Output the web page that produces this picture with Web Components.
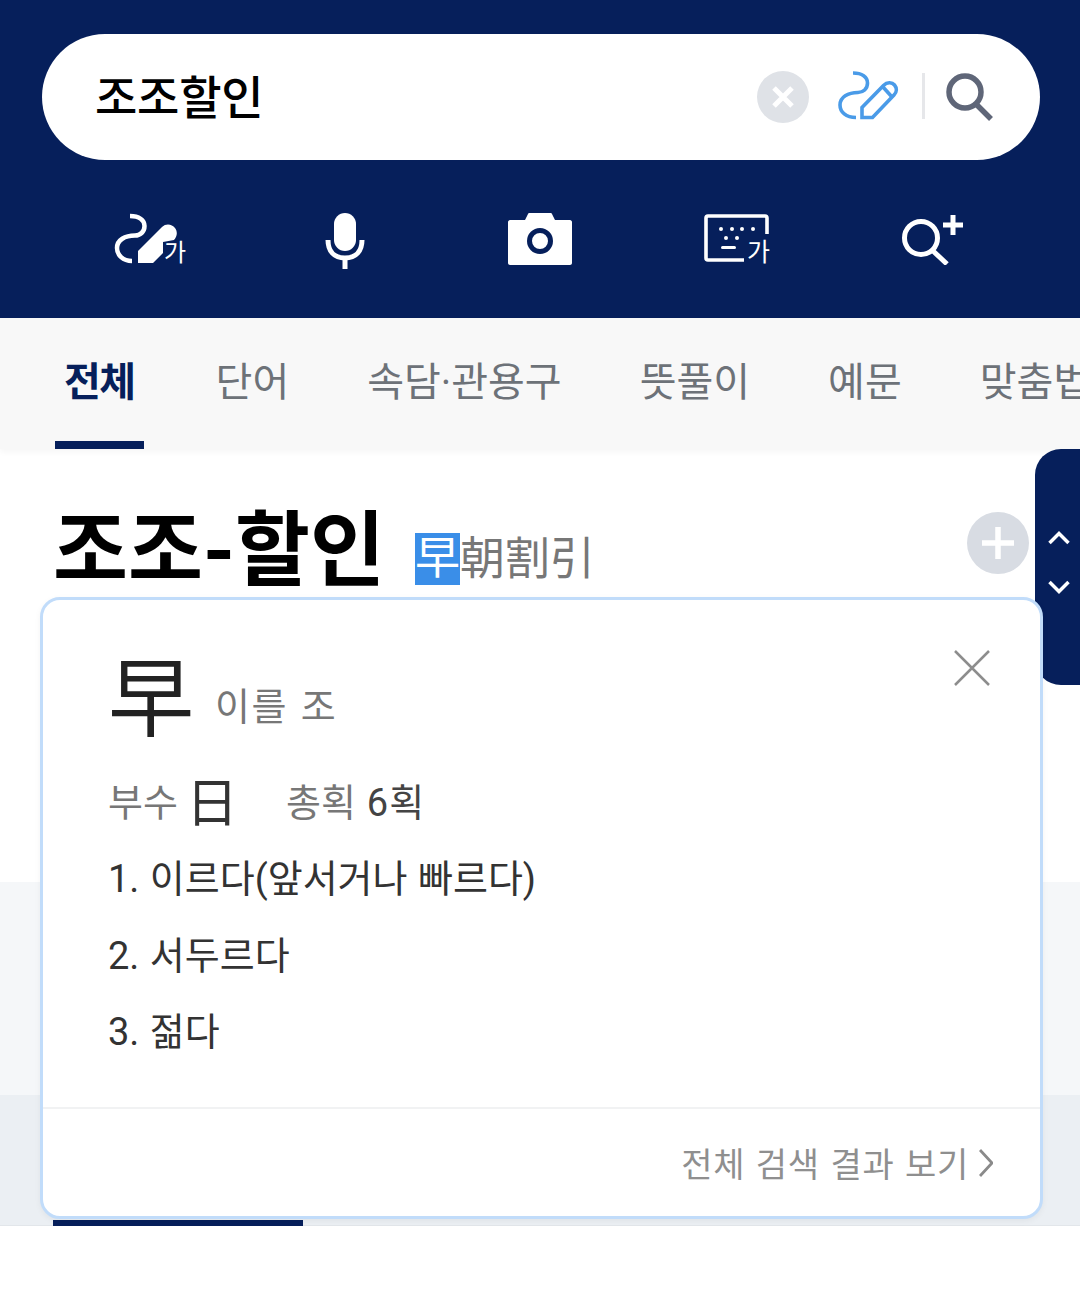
<!DOCTYPE html>
<html lang="ko">
<head>
<meta charset="utf-8">
<title>조조할인</title>
<style>
    html, body { margin: 0; padding: 0; background: #fff; }
    body {
        width: 1080px;
        height: 1308px;
        overflow: hidden;
        position: relative;
        font-family: Roboto, "Noto Sans CJK KR", sans-serif;
    }
</style>
</head>
<body>
<dict-header></dict-header>
<dict-tabs active="0">
    <dict-tab>전체</dict-tab>
    <dict-tab>단어</dict-tab>
    <dict-tab>속담·관용구</dict-tab>
    <dict-tab>뜻풀이</dict-tab>
    <dict-tab>예문</dict-tab>
    <dict-tab>맞춤법</dict-tab>
</dict-tabs>
<dict-result word="조조-할인" hanja="朝割引" mark="早"></dict-result>
<dict-handle></dict-handle>
<hanja-popup char="早" reading="이를 조" radical="日" strokes="6획">
    <li>이르다(앞서거나 빠르다)</li>
    <li>서두르다</li>
    <li>젊다</li>
</hanja-popup>

<script>
const FONT = 'Roboto, "Noto Sans CJK KR", sans-serif';

class DictHeader extends HTMLElement {
    constructor(){
        super();
        this.attachShadow({ mode: 'open' });
        this.shadowRoot.innerHTML = `
            <style>
                :host { display: block; height: 318px; background: #061f5b; box-sizing: border-box; padding: 34px 40px 0 42px; font-family: ${FONT}; }
                #bar { height: 126px; border-radius: 63px; background: #fff; display: flex; align-items: center; padding: 0 47px 0 53px; }
                #query { flex: 1; font-size: 46px; font-weight: 500; color: #000; line-height: 1; margin-top: 2px; letter-spacing: -0.2px; }
                #clear { margin-right: 27px; }
                #pen { margin-right: 22px; }
                #sep { width: 3px; height: 46px; background: #e6e7ea; margin-right: 20px; margin-top: -2px; }
                svg { display: block; flex: none; }
                #tools { display: grid; grid-template-columns: repeat(5, 196px); margin: 29px 0 0 9px; }
                #tools div { height: 100px; display: flex; justify-content: center; align-items: center; }
                text { font-family: ${FONT}; fill: #fff; }
            </style>
            <div id="bar">
                <div id="query">조조할인</div>
                <svg id="clear" width="52" height="52" viewBox="0 0 52 52">
                    <circle cx="26" cy="26" r="26" fill="#dfe2e7"/>
                    <path d="M17 17 L35 35 M35 17 L17 35" stroke="#fff" stroke-width="5" fill="none"/>
                </svg>
                <svg id="pen" width="64" height="54" viewBox="0 0 64 54" fill="none" stroke="#4a9be8" stroke-width="3.6">
                    <path d="M17 3 C26 3 31.5 7 31.5 13 C31.5 19 27 22.5 22 22.5 C12 22.5 4 27 4 35 C4 42 10 47.5 20 47.5"/>
                    <path d="M26 47.5 V37.5 L47.5 15.5 C51 12 56 12 58.5 15 C61 18 61 22 58 25 L36.5 47.5 Z"/>
                    <path d="M47 17 L56 27"/>
                </svg>
                <div id="sep"></div>
                <svg width="48" height="50" viewBox="0 0 48 50" fill="none" stroke="#5f6678" stroke-width="5.5">
                    <circle cx="20" cy="20" r="16"/>
                    <path d="M31 32 L46 47"/>
                </svg>
            </div>
            <div id="tools">
                <div>
                    <svg width="76" height="56" viewBox="0 0 76 56" fill="none" stroke="#fff" stroke-width="4.5" style="margin:3px 0 0 4px">
                        <path d="M17 3 C26 3 31.5 7 31.5 13 C31.5 19 27 22.5 22 22.5 C12 22.5 4 27 4 35 C4 42 10 48 19 48"/>
                        <path d="M25 50 V38 L49 14 C53 10 59 11 62 15 C65 19 64 24 61 27 L50 29 V40 L40 50 Z" fill="#fff" stroke="none"/>
                        <text x="51" y="48" font-size="24" stroke="none">가</text>
                    </svg>
                </div>
                <div>
                    <svg width="44" height="60" viewBox="0 0 44 60" fill="none" stroke="#fff" stroke-width="5" style="margin-top:4px">
                        <rect x="11" y="2" width="22" height="38" rx="11" fill="#fff" stroke="none"/>
                        <path d="M5 29 C5 40 11 47 22 47 C33 47 39 40 39 29 M22 47 V58"/>
                    </svg>
                </div>
                <div>
                    <svg width="64" height="54" viewBox="0 0 64 54" style="margin-left:-3px">
                        <path d="M2 8 H17 L20 2 C20 1 21 1 22 1 H42 C43 1 44 1 44 2 L47 8 H62 C63 8 64 9 64 10 V51 C64 52 63 53 62 53 H2 C1 53 0 52 0 51 V10 C0 9 1 8 2 8 Z" fill="#fff"/>
                        <circle cx="32" cy="29" r="10.5" fill="none" stroke="#061f5b" stroke-width="5"/>
                    </svg>
                </div>
                <div>
                    <svg width="70" height="56" viewBox="0 0 70 56" style="margin:5px 0 0 4px">
                        <path d="M63 20 V4 C63 2.5 62 2 61 2 H4 C3 2 2 2.5 2 4 V44 C2 45.500 3 46 4 46 H40" fill="none" stroke="#fff" stroke-width="3.6"/>
                        <g fill="#fff">
                            <circle cx="17" cy="15" r="2"/><circle cx="28" cy="15" r="2"/><circle cx="38" cy="15" r="2"/><circle cx="49" cy="15" r="2"/>
                            <circle cx="22" cy="24" r="2"/><circle cx="33" cy="24" r="2"/>
                            <rect x="17" y="32" width="15" height="3" rx="1.5"/>
                        </g>
                        <text x="43" y="47" font-size="25">가</text>
                    </svg>
                </div>
                <div>
                    <svg width="64" height="54" viewBox="0 0 64 54" fill="none" stroke="#fff" stroke-width="5" style="margin-top:-2px">
                        <circle cx="20" cy="27" r="16.500"/>
                        <path d="M31 39 L46 53"/>
                        <path d="M52 4 V24 M42 14 H62"/>
                    </svg>
                </div>
            </div>
        `;
    }
}
customElements.define('dict-header', DictHeader);

class DictTab extends HTMLElement {
    constructor(){
        super();
        this.attachShadow({ mode: 'open' });
        this.shadowRoot.innerHTML = `
            <style>
                :host { display: block; flex: none; position: relative; padding: 0 9px; height: 131px; line-height: 130px; font-size: 40px; color: #6d7278; white-space: nowrap; }
                :host([selected]) { color: #061f5b; font-weight: 700; letter-spacing: -1.5px; margin-right: 3px; }
                :host([selected])::after { content: ""; position: absolute; left: 0; right: 0; bottom: 0; height: 8px; background: #061f5b; }
            </style>
            <slot></slot>
        `;
    }
}
customElements.define('dict-tab', DictTab);

class DictTabs extends HTMLElement {
    constructor(){
        super();
        this.attachShadow({ mode: 'open' });
        this.shadowRoot.innerHTML = `
            <style>
                :host { display: flex; gap: 60px; height: 131px; padding-left: 55px; background: #f8f8f8; overflow: hidden; font-family: ${FONT}; box-shadow: 0 3px 6px rgba(0,0,0,.04); position: relative; }
            </style>
            <slot></slot>
        `;
    }
    connectedCallback(){
        const index = Number(this.getAttribute('active') ?? 0);
        const tabs = this.querySelectorAll('dict-tab');
        if(tabs[index]) tabs[index].setAttribute('selected', '');
    }
}
customElements.define('dict-tabs', DictTabs);

class DictResult extends HTMLElement {
    constructor(){
        super();
        this.attachShadow({ mode: 'open' });
        this.shadowRoot.innerHTML = `
            <style>
                :host { display: block; font-family: ${FONT}; }
                #head { height: 433px; box-sizing: border-box; padding: 52px 50px 0 53px; display: flex; align-items: flex-start; }
                #word { font-size: 81.500px; font-weight: 700; line-height: 100px; color: #000; }
                #hanja { margin: 32px 0 0 30px; font-size: 45px; line-height: 52px; font-weight: 400; color: #777; white-space: nowrap; display: flex; }
                #hanja mark { background: #3a8ee8; color: #fff; }
                #hanja span { position: relative; top: 1px; }
                #add { margin: 11px 0 0 auto; position: relative; left: -1px; }
                #band1 { height: 213px; background: #f5f7f9; }
                #band2 { height: 131px; background: #ebeff3; border-bottom: 1px solid #e2e6ea; box-sizing: border-box; position: relative; }
                #bar { position: absolute; left: 53px; bottom: -1px; width: 250px; height: 6px; background: #061f5b; }
                svg { display: block; flex: none; }
            </style>
            <div id="head">
                <div id="word"></div>
                <div id="hanja"><mark></mark><span></span></div>
                <svg id="add" width="62" height="62" viewBox="0 0 62 62">
                    <circle cx="31" cy="31" r="31" fill="#d8dce3"/>
                    <path d="M15 31 H47 M31 15 V47" stroke="#fff" stroke-width="5.500"/>
                </svg>
            </div>
            <div id="band1"></div>
            <div id="band2"><div id="bar"></div></div>
        `;
    }
    connectedCallback(){
        this.shadowRoot.getElementById('word').textContent = this.getAttribute('word');
        this.shadowRoot.querySelector('#hanja mark').textContent = this.getAttribute('mark');
        this.shadowRoot.querySelector('#hanja span').textContent = this.getAttribute('hanja');
    }
}
customElements.define('dict-result', DictResult);

class DictHandle extends HTMLElement {
    constructor(){
        super();
        this.attachShadow({ mode: 'open' });
        this.shadowRoot.innerHTML = `
            <style>
                :host { display: flex; flex-direction: column; align-items: center; gap: 33px; position: absolute; left: 1035px; top: 449px; width: 45px; height: 236px; box-sizing: border-box; padding: 81px 0 0 3px; background: #061f5b; border-radius: 26px 0 0 26px; }
                svg { display: block; }
            </style>
            <svg width="22" height="16" viewBox="0 0 22 16" fill="none" stroke="#fff" stroke-width="3.500"><path d="M1.500 13 L11 3.500 L20.500 13"/></svg>
            <svg width="22" height="16" viewBox="0 0 22 16" fill="none" stroke="#fff" stroke-width="3.500"><path d="M1.500 3 L11 12.500 L20.500 3"/></svg>
        `;
    }
}
customElements.define('dict-handle', DictHandle);

class HanjaPopup extends HTMLElement {
    constructor(){
        super();
        this.attachShadow({ mode: 'open' });
        this.shadowRoot.innerHTML = `
            <style>
                :host { display: flex; flex-direction: column; position: absolute; left: 40px; top: 597px; width: 1003px; height: 622px; box-sizing: border-box; background: #fff; border: 3px solid #c1dcfa; border-radius: 20px; font-family: ${FONT}; color: #333; box-shadow: 0 2px 6px rgba(0,0,0,.05); }
                #body { flex: 1; position: relative; padding: 46px 0 0 65px; }
                #top { display: flex; align-items: flex-end; height: 94px; }
                #char { font-size: 86px; line-height: 94px; font-weight: 400; color: #222; width: 107px; position: relative; top: 8px; }
                #reading { font-size: 38px; line-height: 50px; color: #777; margin-bottom: 8px; letter-spacing: 1.5px; word-spacing: 2px; }
                #meta { display: flex; align-items: center; height: 62px; margin-top: 28px; font-size: 38px; color: #777; }
                #radical { font-size: 52px; color: #333; font-weight: 400; margin: 0 48px 0 8px; }
                #strokes { color: #444; margin-left: 11px; letter-spacing: 1px; }
                ol { margin: 11px 0 0; padding: 0; list-style: none; counter-reset: n; }
                ::slotted(li) { display: block; font-size: 38px; line-height: 76.500px; color: #333; counter-increment: n; word-spacing: 1px; }
                ::slotted(li)::before { content: counter(n) ". "; }
                #close { position: absolute; right: 50px; top: 50px; }
                #foot { height: 109px; box-sizing: border-box; border-top: 2px solid #f1f2f3; display: flex; justify-content: flex-end; align-items: center; padding-right: 47px; font-size: 34px; color: #8f8f8f; gap: 10px; letter-spacing: 0.7px; word-spacing: 1.500px; }
                svg { display: block; flex: none; }
            </style>
            <div id="body">
                <div id="top"><div id="char"></div><div id="reading"></div></div>
                <div id="meta"><span>부수</span><span id="radical"></span><span>총획</span><span id="strokes"></span></div>
                <ol><slot></slot></ol>
                <svg id="close" width="36" height="36" viewBox="0 0 36 36" stroke="#8d8d8d" stroke-width="2.500"><path d="M1 1 L35 35 M35 1 L1 35"/></svg>
            </div>
            <div id="foot">
                <span>전체 검색 결과 보기</span>
                <svg width="14" height="30" viewBox="0 0 14 30" fill="none" stroke="#8a8a8a" stroke-width="2.800"><path d="M1 2 L13 15 L1 28"/></svg>
            </div>
        `;
    }
    connectedCallback(){
        const root = this.shadowRoot;
        root.getElementById('char').textContent = this.getAttribute('char');
        root.getElementById('reading').textContent = this.getAttribute('reading');
        root.getElementById('radical').textContent = this.getAttribute('radical');
        root.getElementById('strokes').textContent = this.getAttribute('strokes');
    }
}
customElements.define('hanja-popup', HanjaPopup);
</script>
</body>
</html>
